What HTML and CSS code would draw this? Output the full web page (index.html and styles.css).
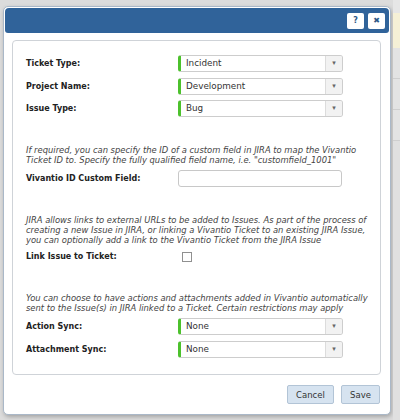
FILE: index.html
```html
<!DOCTYPE html>
<html>
<head>
<meta charset="utf-8">
<link rel="stylesheet" href="styles.css">
</head>
<body>
<div class="page">
  <div class="dialog">
    <div class="titlebar">
      <button class="tbtn">?</button>
      <button class="tbtn">&#x2716;</button>
    </div>
    <div class="panel">
      <div class="row"><span class="label">Ticket Type:</span><div class="select"><span class="val">Incident</span><span class="arrow">&#9662;</span></div></div>
      <div class="row"><span class="label">Project Name:</span><div class="select"><span class="val">Development</span><span class="arrow">&#9662;</span></div></div>
      <div class="row"><span class="label">Issue Type:</span><div class="select"><span class="val">Bug</span><span class="arrow">&#9662;</span></div></div>

      <p class="note s2">If required, you can specify the ID of a custom field in JIRA to map the Vivantio<br>Ticket ID to. Specify the fully qualified field name, i.e. "customfield_1001"</p>
      <div class="row r-input"><span class="label">Vivantio ID Custom Field:</span><div class="input"></div></div>

      <p class="note s3">JIRA allows links to external URLs to be added to Issues. As part of the process of<br>creating a new Issue in JIRA, or linking a Vivantio Ticket to an existing JIRA Issue,<br>you can optionally add a link to the Vivantio Ticket from the JIRA Issue</p>
      <div class="row r-check"><span class="label">Link Issue to Ticket:</span><span class="check"></span></div>

      <p class="note s4">You can choose to have actions and attachments added in Vivantio automatically<br>sent to the Issue(s) in JIRA linked to a Ticket. Certain restrictions may apply</p>
      <div class="row r-sync"><span class="label">Action Sync:</span><div class="select"><span class="val">None</span><span class="arrow">&#9662;</span></div></div>
      <div class="row"><span class="label">Attachment Sync:</span><div class="select"><span class="val">None</span><span class="arrow">&#9662;</span></div></div>
    </div>
    <div class="footer">
      <button class="btn cancel">Cancel</button>
      <button class="btn save">Save</button>
    </div>
  </div>
  <div class="behind">
    <div class="b-top"></div>
    <div class="b-note"></div>
    <div class="b-row"></div>
    <div class="b-row"></div>
    <div class="b-row"></div>
    <div class="b-rest"></div>
  </div>
</div>
</body>
</html>
```

FILE: styles.css
```css
html, body {
  margin: 0;
  padding: 0;
  background: #dcdcdc;
  font-family: "DejaVu Sans", Verdana, sans-serif;
}
.page {
  display: flex;
  width: 400px;
  height: 420px;
  overflow: hidden;
}
.dialog {
  margin: 6px 0 0 3px;
  width: 388px;
  height: 409px;
  box-sizing: border-box;
  background: #fff;
  border: 1px solid #aab8c8;
  border-radius: 5px;
  padding: 1px;
  box-shadow: 1px 2px 4px rgba(0,0,0,0.25);
  display: flex;
  flex-direction: column;
  flex-shrink: 0;
}
.titlebar {
  height: 25px;
  flex-shrink: 0;
  background: #30639a;
  border-radius: 4px 4px 3px 3px;
  display: flex;
  justify-content: flex-end;
  align-items: center;
  gap: 4px;
  padding-right: 4px;
}
.tbtn {
  width: 17px;
  height: 16px;
  padding: 0;
  border: none;
  border-radius: 2px;
  background: #fff;
  color: #2b5887;
  font-family: "DejaVu Sans", sans-serif;
  font-weight: bold;
  font-size: 8px;
  line-height: 16px;
  text-align: center;
}
.panel {
  margin: 7px 8px 0 7px;
  border: 1px solid #cfd3d8;
  border-radius: 4px;
  padding: 14px 13px 19px 13px;
  height: 335px;
  flex-shrink: 0;
  box-sizing: border-box;
}
.row {
  display: flex;
  align-items: center;
  height: 17px;
  margin-bottom: 5.5px;
}
.label {
  width: 152px;
  flex-shrink: 0;
  font-weight: bold;
  font-size: 8px;
  color: #222;
}
.select {
  width: 165px;
  height: 17px;
  box-sizing: border-box;
  border: 1px solid #cdcdcd;
  border-left: 3px solid #4cc12c;
  border-radius: 3px;
  display: flex;
  align-items: stretch;
  background: #fff;
}
.val {
  flex: 1;
  padding-left: 5px;
  font-size: 8.8px;
  line-height: 15px;
  color: #333;
}
.arrow {
  width: 16px;
  border-left: 1px solid #dcdcdc;
  background: #f2f2f2;
  color: #666;
  font-size: 7px;
  line-height: 15px;
  text-align: center;
  border-radius: 0 2px 2px 0;
}
.note {
  margin: 0 0 5px 0;
  font-style: italic;
  font-size: 8.4px;
  line-height: 10px;
  color: #444;
  white-space: nowrap;
}
.s2 { margin-top: 27.5px; }
.s3 { margin-top: 28px; }
.s4 { margin-top: 28px; }
.input {
  width: 164px;
  height: 17px;
  box-sizing: border-box;
  border: 1px solid #c8c8c8;
  border-radius: 3px;
}
.r-input { margin-bottom: 0; }
.r-check { margin-top: -1.5px; margin-bottom: 0; }
.check {
  width: 10px;
  height: 10px;
  box-sizing: border-box;
  border: 1px solid #909090;
  margin-left: 4px;
  background: #fff;
}
.footer {
  display: flex;
  justify-content: flex-end;
  gap: 7px;
  padding: 10px 9px 0 0;
}
.btn {
  height: 19px;
  padding: 0;
  background: #d6e3f0;
  border: 1px solid #b2c4d6;
  border-radius: 2px;
  font-family: "DejaVu Sans", sans-serif;
  font-size: 8.5px;
  color: #333;
}
.cancel { width: 47px; }
.save { width: 39px; }
.behind {
  margin-left: 2px;
  flex: 1;
  display: flex;
  flex-direction: column;
}
.b-top { height: 13px; background: #e6e6e6; }
.b-note { height: 35px; background: #f5f0d6; }
.b-row { height: 30px; border-bottom: 1px solid #cfcfcf; background: #e3e3e3; }
.b-rest { flex: 1; background: #e0e0e0; }
```
